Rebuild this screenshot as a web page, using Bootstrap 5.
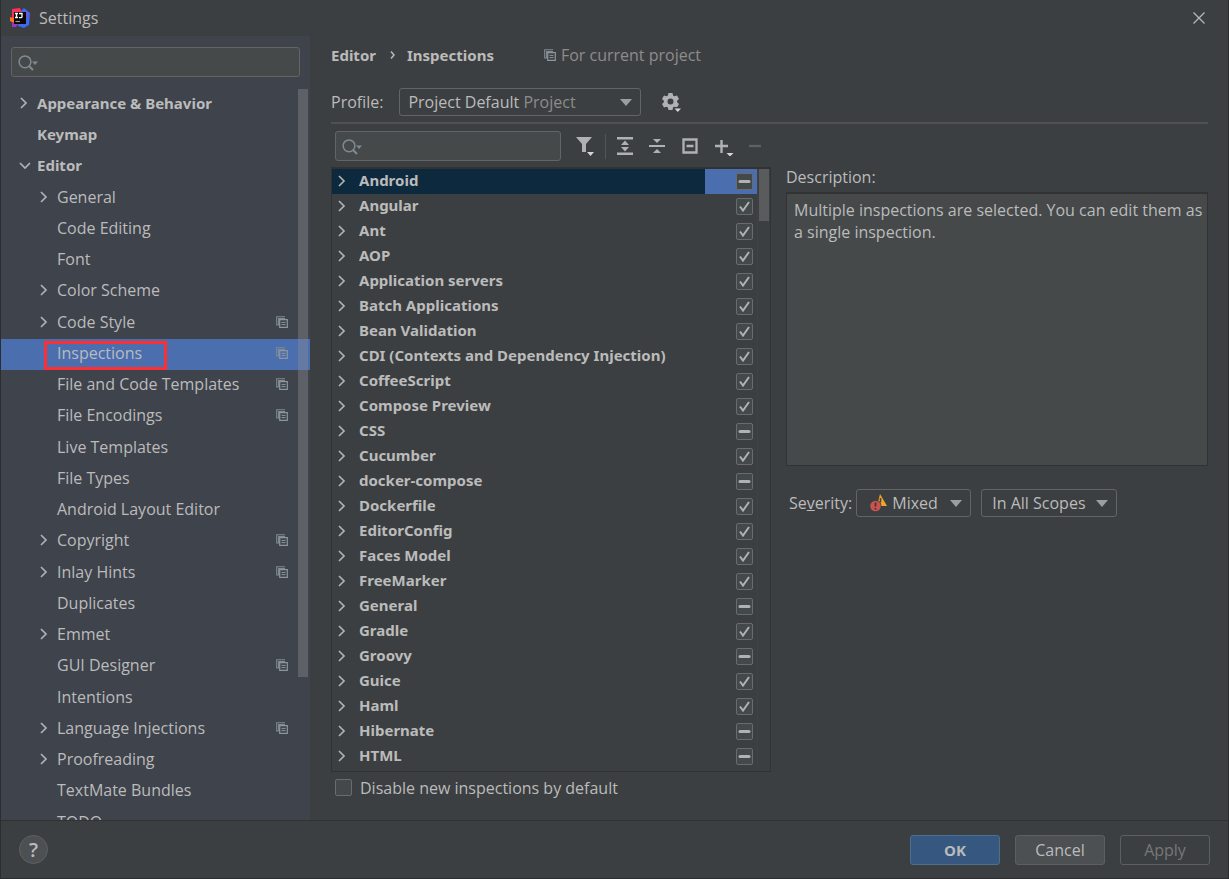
<!DOCTYPE html>
<html lang="en">
<head>
<meta charset="utf-8">
<meta name="viewport" content="width=device-width, initial-scale=1">
<title>Settings</title>
<link href="https://cdn.jsdelivr.net/npm/bootstrap@5.3.0/dist/css/bootstrap.min.css" rel="stylesheet">
<style>
  :root { --panel:#3c3f41; --side:#3f434c; --field:#45494a; --edge:#646464; --line:#323232; --ink:#bbbbbb; --dim:#8c8c8c; --icon:#afb1b3; --sel:#4b6eaf; }
  body { font-family:"Open Sans","Noto Sans",sans-serif; font-size:16px; line-height:22px; color:var(--ink); background:var(--panel); }
  .dialog { height:100vh; border:1px solid #2b2d2e; border-top:0; }
  .titlebar { height:36px; padding:0 23px 0 9px; gap:9px; }
  svg { display:block; flex:none; }
  .icon-btn { background:none; border:0; padding:0; }

  .sidebar { width:309px; flex:none; background:var(--side); }
  .side-search { margin:11px 10px 12px; }
  .field { height:30px; background:var(--field); border:1px solid var(--edge); border-radius:3px; color:var(--ink); padding:0 8px 0 32px; font-size:16px; }
  .field:focus { background:var(--field); color:var(--ink); }
  .field-icon { left:7px; top:8px; pointer-events:none; }
  .tree-item { height:31px; padding-bottom:3px; color:var(--ink); text-decoration:none; }
  .tree li:nth-child(4n+3) { margin-bottom:1px; }
  .tree-item.level-0 { padding-left:18px; font-size:15px; font-weight:700; font-family:"Noto Sans",sans-serif; }
  .tree-item.level-1 { padding-left:38px; }
  .tree-item .twisty { width:18px; flex:none; }
  .tree-item .scope { margin-right:22px; }
  .tree-item.selected { background:var(--sel); }
  .highlight { left:43px; top:2px; width:123px; height:29px; border:3px solid #fb2f34; pointer-events:none; }
  .thumb { width:10px; background:rgba(140,140,145,.4); }
  .side-thumb { right:2px; top:0; height:588px; }

  .content { padding:8px 20px 0 21px; }
  .crumbs { height:22px; font-family:"Noto Sans",sans-serif; font-size:15px; }
  .crumb-arrow { margin:0 12px 0 14px; }
  .hint { margin-left:50px; gap:5px; color:var(--dim); font-family:"Open Sans","Noto Sans",sans-serif; font-size:16px; font-weight:400; }
  .profile-row { padding:22px 0 6px; }
  .picker { appearance:none; height:28px; border:1px solid var(--edge); border-radius:3px; background-color:transparent; color:var(--ink); padding:0 30px 0 8px; font-size:16px; line-height:22px;
    background-image:url("data:image/svg+xml,%3Csvg xmlns='http://www.w3.org/2000/svg' width='12' height='7'%3E%3Cpath d='M0 0h12L6 7z' fill='%239b9fa1'/%3E%3C/svg%3E"); background-repeat:no-repeat; background-position:right 8px center; background-size:12px 7px; }
  .picker option { background:var(--panel); }
  .profile { width:242px; }
  .profile-kind { left:124px; top:3px; color:var(--dim); pointer-events:none; }
  .gear { margin:2px 0 0 21px; }
  .mixed { width:115px; padding-left:35px; }
  .scopes { width:136px; padding-left:10px; margin-left:10px; }
  .severity-icon { left:14px; top:5px; pointer-events:none; }
  .rule { height:2px; background:#515151; }

  .panes { gap:15px; padding-top:7px; }
  .left-pane { flex:440 1 0; }
  .right-pane { flex:422 1 0; }
  .toolbar { height:30px; padding-left:4px; margin-bottom:6px; }
  .toolbar .search { flex:0 1 226px; }
  .tools { gap:14px; margin-left:14px; }
  .divider { width:1px; height:25px; background:#555555; margin:0 -4px; }
  .inspections { border:1px solid var(--line); border-top-width:2px; padding-right:12px; }
  .inspections ul { border-right:1px solid #404345; }
  .inspection { height:25px; font-size:15px; font-weight:700; font-family:"Noto Sans",sans-serif; }
  .inspection .twisty { width:27px; padding:0 0 2px 5px; flex:none; }
  .inspection label { padding-bottom:3px; }
  .inspection .state { width:52px; padding-right:4px; flex:none; align-self:stretch; }
  .inspection.selected { background:#0d293e; }
  .inspection.selected .state { background:var(--sel); }
  .list-thumb { right:1px; top:0; height:52px; background:#595b5d; }
  .tick { appearance:none; width:17px; height:17px; margin:0; flex:none; border:1px solid #6b6b6b; border-radius:2px; background:#43494a center/15px 15px no-repeat; }
  .tick:checked { background-image:url("data:image/svg+xml,%3Csvg xmlns='http://www.w3.org/2000/svg' width='15' height='15'%3E%3Cpath d='M3 7.5l3 4L12 3' fill='none' stroke='%23afb1b3' stroke-width='2'/%3E%3C/svg%3E"); }
  .tick:indeterminate { background-image:url("data:image/svg+xml,%3Csvg xmlns='http://www.w3.org/2000/svg' width='15' height='15'%3E%3Cpath d='M3 7.5h9' stroke='%23afb1b3' stroke-width='3' stroke-linecap='round'/%3E%3C/svg%3E"); }
  .disable-row { height:48px; padding:0 0 17px 4px; }
  .desc-title { padding:35px 0 4px; }
  .description { flex:0 1 274px; border:1px solid var(--line); border-top-width:2px; background:var(--field); padding:5px 4px 5px 7px; }
  .severity-row { margin-top:23px; padding-left:3px; }

  .footer { height:58px; padding:0 18px; border-top:1px solid var(--line); }
  .help { width:29px; height:29px; border:1px solid #5e6060; border-radius:50%; background:#4c5052; color:var(--ink); font-size:20px; line-height:26px; font-weight:600; padding:0; }
  .actions { gap:15px; }
  .action { width:90px; height:30px; padding:0; border:1px solid #5e6060; border-radius:3px; background:#4c5052; color:var(--ink); line-height:22px; }
  .action.primary { background:#365880; border-color:#4c708c; font-size:15px; font-weight:700; }
  .action:disabled { background:transparent; color:#777777; }
</style>
</head>
<body>
<svg width="0" height="0" class="position-absolute" aria-hidden="true">
  <symbol id="right" viewBox="0 0 9 12"><path d="M2 1l5 5-5 5" fill="none" stroke="#afb1b3" stroke-width="1.7"/></symbol>
  <symbol id="down" viewBox="0 0 12 9"><path d="M1 2l5 5 5-5" fill="none" stroke="#afb1b3" stroke-width="1.7"/></symbol>
  <symbol id="copy" viewBox="0 0 12 12"><path d="M9 .7H.7V9H3M9 2.6H2.6V9" fill="none" stroke="#7f8b91" stroke-width="1.1"/><path d="M3.7 3.7h7.6v7.6H3.7z" fill="none" stroke="#8b979d" stroke-width="1.2"/><path d="M5.5 6.4h4M5.5 8.6h4" stroke="#8b979d"/></symbol>
  <symbol id="search" viewBox="0 0 21 16"><circle cx="7" cy="6.8" r="5.9" fill="none" stroke="#7f8b91" stroke-width="1.5"/><path d="M11 11l4 4" stroke="#7f8b91" stroke-width="2"/><path d="M14 6.500h6l-3 3.500z" fill="#7f8b91"/></symbol>
</svg>

<div class="dialog d-flex flex-column overflow-hidden">
  <header class="titlebar d-flex align-items-center flex-shrink-0">
    <svg width="20" height="20" viewBox="0 0 20 20"><path d="M2 1l8-1 2 5-8 7-4 0 2-3z" fill="#fe315d"/><path d="M0 9l5 2-1 4-4-2z" fill="#f97a12"/><path d="M2 14l6 2-2 3-4 0z" fill="#a034c8"/><path d="M11 3l3-3 6 5-1 12-5 3-6-2z" fill="#3f68f0"/><path d="M13 2l5 2 1 5-3 1z" fill="#6b57e0"/><path d="M4 4h12v12H4z" fill="#080808"/><path d="M5 5.500h3M6.500 5.500v4M5 9.500h3M9 5.500h3v3.200q0 .9-1 .9H9" fill="none" stroke="#fff" stroke-width="1.300"/><path d="M5.500 13.500h4.500" stroke="#999" stroke-width="1.200"/></svg>
    <span>Settings</span>
    <button class="icon-btn ms-auto" aria-label="Close"><svg width="12" height="12" viewBox="0 0 12 12"><path d="M.5.5l11 11M11.500.5l-11 11" stroke="#b5b7b8" stroke-width="1.3"/></svg></button>
  </header>

  <div class="d-flex flex-fill overflow-hidden">
    <aside class="sidebar d-flex flex-column">
      <div class="side-search position-relative">
        <input class="field w-100" type="text" aria-label="Search settings">
        <svg class="field-icon position-absolute" width="21" height="16"><use href="#search"/></svg>
      </div>
      <nav class="position-relative flex-fill overflow-hidden" aria-label="Settings">
        <ul class="tree list-unstyled mb-0" id="tree"></ul>
        <div class="thumb side-thumb position-absolute"></div>
      </nav>
    </aside>

    <main class="content d-flex flex-column flex-fill overflow-hidden">
      <div class="crumbs d-flex align-items-center fw-bold">
        <span>Editor</span>
        <svg class="crumb-arrow" width="5" height="8" viewBox="0 0 5 8"><path d="M1 .5L4 4 1 7.500" fill="none" stroke="#bbb" stroke-width="1.5"/></svg>
        <span>Inspections</span>
        <span class="hint d-flex align-items-center"><svg width="12" height="12"><use href="#copy"/></svg><span>For current project</span></span>
      </div>
      <div class="profile-row d-flex align-items-center">
        <label for="profile">Profile:</label>
        <div class="position-relative ms-3">
          <select class="picker profile" id="profile"><option>Project Default</option></select>
          <span class="profile-kind position-absolute">Project</span>
        </div>
        <button class="icon-btn gear" aria-label="Profile actions"><svg width="20" height="20" viewBox="0 0 20 20"><path fill="#afb1b3" fill-rule="evenodd" d="M6.500 0h4l.6 2.500 1.400.8 2.500-.8 2 3.500-1.900 1.700v1.600L17 11l-2 3.500-2.500-.8-1.400.8-.6 2.500h-4l-.6-2.500-1.400-.8-2.500.8L0 11l1.900-1.700V7.700L0 6l2-3.500 2.500.8 1.400-.8zM8.500 5.500a3 3 0 1 0 0 6 3 3 0 0 0 0-6z"/><path d="M11 14h9l-4.500 5.500z" fill="#3c3f41"/><path d="M12.500 15.500h6.500l-3.200 3.500z" fill="#d5d5d5"/></svg></button>
      </div>
      <div class="rule flex-shrink-0"></div>

      <div class="panes d-flex flex-fill overflow-hidden">
        <section class="left-pane d-flex flex-column">
          <div class="toolbar d-flex align-items-center flex-shrink-0">
            <div class="search position-relative">
              <input class="field w-100" type="text" aria-label="Search inspections">
              <svg class="field-icon position-absolute" width="21" height="16"><use href="#search"/></svg>
            </div>
            <div class="tools d-flex align-items-center">
              <button class="icon-btn" aria-label="Filter"><svg width="20" height="20" viewBox="0 0 20 20"><path d="M1 1h16l-6 7v8H7V8z" fill="#afb1b3"/><path d="M12 16h7l-3.500 4z" fill="#d5d5d5"/></svg></button>
              <span class="divider"></span>
              <button class="icon-btn" aria-label="Expand all"><svg width="18" height="20" viewBox="0 0 18 20"><path d="M1 1h16v2.500H1zM1 16.500h16V19H1zM9 4.500L13 9H5zM9 15.500l4-4.500H5z" fill="#afb1b3"/></svg></button>
              <button class="icon-btn" aria-label="Collapse all"><svg width="18" height="20" viewBox="0 0 18 20"><path d="M1 9h16v2H1zM9 7L5 3h8zM9 13l-4 4h8z" fill="#afb1b3"/></svg></button>
              <button class="icon-btn" aria-label="Reset to empty"><svg width="20" height="20" viewBox="0 0 20 20"><path d="M3.500 3.500h13v13h-13zM6.500 10h7" fill="none" stroke="#afb1b3" stroke-width="2.3"/></svg></button>
              <button class="icon-btn" aria-label="Add"><svg width="20" height="20" viewBox="0 0 20 20"><path d="M1 10h13M7.500 4v13" stroke="#afb1b3" stroke-width="2.4"/><path d="M12.500 17h7L16 20.500z" fill="#d5d5d5"/></svg></button>
              <button class="icon-btn" aria-label="Remove" disabled><svg width="14" height="20" viewBox="0 0 14 20"><path d="M1 10h12" stroke="#5f6163" stroke-width="2.3"/></svg></button>
            </div>
          </div>
          <div class="inspections position-relative flex-fill overflow-hidden">
            <ul class="list-unstyled mb-0 h-100" id="inspections"></ul>
            <div class="thumb list-thumb position-absolute"></div>
          </div>
          <div class="disable-row d-flex align-items-center flex-shrink-0">
            <input class="tick" type="checkbox" id="disableNew">
            <label class="ms-2" for="disableNew">Disable new inspections by default</label>
          </div>
        </section>

        <section class="right-pane d-flex flex-column">
          <div class="desc-title">Description:</div>
          <div class="description">Multiple inspections are selected. You can edit them as a single inspection.</div>
          <div class="severity-row d-flex align-items-center">
            <label for="severity">Se<u>v</u>erity:</label>
            <div class="position-relative ms-1">
              <select class="picker mixed" id="severity"><option>Mixed</option></select>
              <svg class="severity-icon position-absolute" width="17" height="18" viewBox="0 0 17 18"><path d="M10 0l7 12H7z" fill="#f2a52b"/><path d="M10.500 4v4.500" stroke="#4a4338" stroke-width="1.6"/><circle cx="5.500" cy="12" r="6" fill="#3c3f41"/><circle cx="5.500" cy="12" r="5.300" fill="#c75450"/><path d="M5.500 8.500v4M5.500 14v1.600" stroke="#45322f" stroke-width="1.7"/></svg>
            </div>
            <select class="picker scopes" aria-label="Scope"><option>In All Scopes</option></select>
          </div>
        </section>
      </div>
    </main>
  </div>

  <footer class="footer d-flex align-items-center flex-shrink-0">
    <button class="help" aria-label="Help">?</button>
    <div class="actions d-flex ms-auto">
      <button class="action primary">OK</button>
      <button class="action">Cancel</button>
      <button class="action" disabled>Apply</button>
    </div>
  </footer>
</div>

<script>
  // [label, level, twisty, has project scope icon]
  const settings = [
    ["Appearance & Behavior",0,"right"],["Keymap",0],["Editor",0,"down"],["General",1,"right"],["Code Editing",1],["Font",1],
    ["Color Scheme",1,"right"],["Code Style",1,"right",1],["Inspections",1,"",1],["File and Code Templates",1,"",1],["File Encodings",1,"",1],
    ["Live Templates",1],["File Types",1],["Android Layout Editor",1],["Copyright",1,"right",1],["Inlay Hints",1,"right",1],["Duplicates",1],
    ["Emmet",1,"right"],["GUI Designer",1,"",1],["Intentions",1],["Language Injections",1,"right",1],["Proofreading",1,"right"],
    ["TextMate Bundles",1],["TODO",1]
  ];
  const glyphSize = { right:'width="9" height="12"', down:'width="12" height="9"' };
  document.getElementById("tree").innerHTML = settings.map(([name, level, twisty, scope]) => {
    const on = name === "Inspections";
    return `<li class="position-relative"><a href="#" class="tree-item level-${level} ${on ? "selected" : ""} d-flex align-items-center">
      <span class="twisty">${twisty ? `<svg ${glyphSize[twisty]}><use href="#${twisty}"/></svg>` : ""}</span>
      <span>${name.replace("&", "&amp;")}</span>${scope ? '<svg class="scope ms-auto" width="12" height="12"><use href="#copy"/></svg>' : ""}</a>
      ${on ? '<div class="highlight position-absolute"></div>' : ""}</li>`;
  }).join("");

  const partial = ["Android","CSS","docker-compose","General","Groovy","Hibernate","HTML"];
  const inspections = ["Android","Angular","Ant","AOP","Application servers","Batch Applications","Bean Validation",
    "CDI (Contexts and Dependency Injection)","CoffeeScript","Compose Preview","CSS","Cucumber","docker-compose","Dockerfile",
    "EditorConfig","Faces Model","FreeMarker","General","Gradle","Groovy","Guice","Haml","Hibernate","HTML"];
  document.getElementById("inspections").innerHTML = inspections.map((name, i) =>
    `<li class="inspection ${i ? "" : "selected"} d-flex align-items-center"><span class="twisty"><svg width="9" height="12"><use href="#right"/></svg></span>
      <label class="flex-fill" for="i${i}">${name}</label>
      <span class="state d-flex align-items-center justify-content-end"><input class="tick" type="checkbox" id="i${i}" ${partial.includes(name) ? "" : "checked"}></span></li>`).join("");
  inspections.forEach((name, i) => { document.getElementById("i" + i).indeterminate = partial.includes(name); });
</script>
<script src="https://cdn.jsdelivr.net/npm/bootstrap@5.3.0/dist/js/bootstrap.bundle.min.js"></script>
</body>
</html>
